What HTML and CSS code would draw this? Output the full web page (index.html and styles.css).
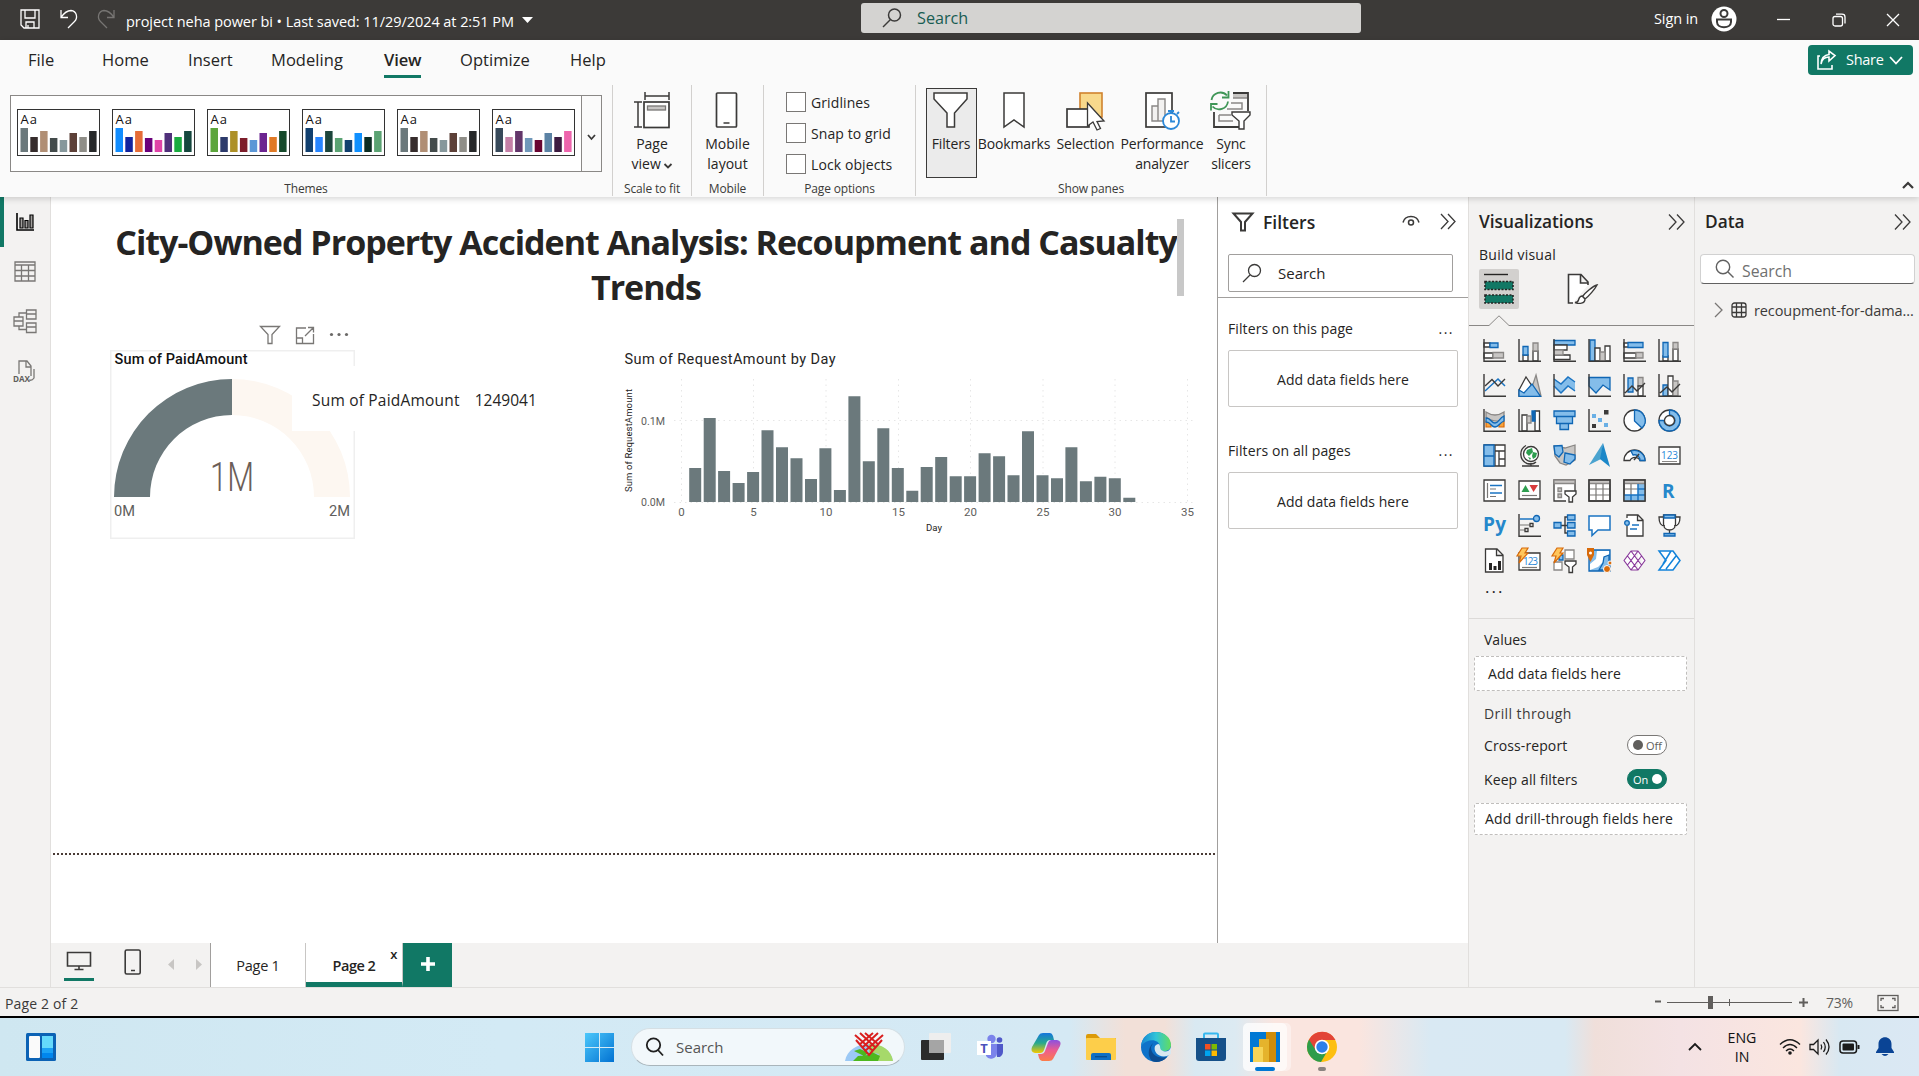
FILE: index.html
```html
<!DOCTYPE html>
<html lang="en">
<head>
<meta charset="utf-8">
<title>project neha power bi</title>
<link rel="stylesheet" href="styles.css">
</head>
<body>
<div class="app">
<header class="titlebar">
  <div class="quick">
    <svg width="20" height="20" viewBox="0 0 20 20" class="ln"><path d="M1 1H19V19H4L1 16ZM5 1V9H15V1M6 19V13H14V19M8 19V16"/></svg>
    <svg width="19" height="20" viewBox="0 0 19 20" class="ln"><path d="M2 1V8.500H9M2 8.500C5 4 8 1.500 12 1.500C18 2 19 9 15.500 12.500L9 19"/></svg>
    <svg width="19" height="20" viewBox="0 0 19 20" class="ln dim"><path d="M17 1V8.500H10M17 8.500C14 4 11 1.500 7 1.500C1 2 0 9 3.500 12.500L10 19"/></svg>
  </div>
  <div class="doc-title">project neha power bi • Last saved: 11/29/2024 at 2:51 PM</div>
  <svg class="caret" width="12" height="6"><path d="M0 0H11L5.500 6Z" fill="#fff"/></svg>
  <div class="top-search"><svg width="20" height="20" viewBox="0 0 20 20"><g fill="none" stroke="#3b3a39" stroke-width="1.500"><circle cx="12.500" cy="7" r="6"/><path d="M8.500 11.500L1 19"/></g></svg><span>Search</span></div>
  <div class="account">Sign in
    <svg width="26" height="26" viewBox="0 0 26 26"><circle cx="13" cy="13" r="12.500" fill="#fff"/><g fill="none" stroke="#3b3a39" stroke-width="2"><circle cx="13" cy="7.500" r="3.500"/><path d="M6 13.500H20V16C20 23 6 23 6 16Z"/></g></svg>
  </div>
  <div class="wincontrols">
    <svg width="14" height="14" class="ln"><path d="M0 6.500H13"/></svg>
    <svg width="14" height="14" class="ln"><rect x="1" y="3.500" width="9.500" height="9.500" rx="2"/><path d="M4 1.200H10Q13 1.200 13 4V10.500"/></svg>
    <svg width="14" height="14" class="ln"><path d="M1 1L13 13M13 1L1 13"/></svg>
  </div>
</header>

<section class="ribbon">
  <div class="tabrow">
    <nav class="tabs"><span>File</span><span>Home</span><span>Insert</span><span>Modeling</span><span class="on">View</span><span>Optimize</span><span>Help</span></nav>
    <div class="share">
      <svg width="19" height="20" viewBox="0 0 19 20" class="ln"><path d="M3 6H1V19H15V15M4 14C5 9 8 7 12 7V11L18 5.500L12 1V4.500C7 5 4.500 8 4 14Z" stroke-width="1.600"/></svg>
      <span>Share</span>
      <svg width="14" height="9" class="ln"><path d="M1 1L7 7.500L13 1" stroke-width="1.800"/></svg>
    </div>
  </div>
  <div class="groups">
    <div class="group g-themes">
      <div class="gallery">
        <div class="thumbs">
          <svg class="thumb" viewBox="0 0 83 47"><text x="3.500" y="15">Aa</text><g><path fill="#6b797c" d="M3.500 19h7.500v24h-7.500z"/><path fill="#362c2c" d="M13.300 28h7.500v15h-7.500z"/><path fill="#b08e74" d="M23.100 22h7.500v21h-7.500z"/><path fill="#434b4b" d="M32.900 29h7.500v14h-7.500z"/><path fill="#86989c" d="M42.700 31h7.500v12h-7.500z"/><path fill="#5d4038" d="M52.500 24h7.500v19h-7.500z"/><path fill="#8f8e88" d="M62.300 28h7.500v15h-7.500z"/><path fill="#262829" d="M72.100 22h7.500v21h-7.500z"/></g></svg>
          <svg class="thumb" viewBox="0 0 83 47"><text x="3.500" y="15">Aa</text><g><path fill="#118dff" d="M3.500 19h7.500v24h-7.500z"/><path fill="#12239e" d="M13.300 28h7.500v15h-7.500z"/><path fill="#e66c37" d="M23.100 22h7.500v21h-7.500z"/><path fill="#6b007b" d="M32.900 29h7.500v14h-7.500z"/><path fill="#e044a7" d="M42.700 31h7.500v12h-7.500z"/><path fill="#50307a" d="M52.500 24h7.500v19h-7.500z"/><path fill="#1aab40" d="M62.300 28h7.500v15h-7.500z"/><path fill="#15473e" d="M72.100 22h7.500v21h-7.500z"/></g></svg>
          <svg class="thumb" viewBox="0 0 83 47"><text x="3.500" y="15">Aa</text><g><path fill="#5ca53b" d="M3.500 19h7.500v24h-7.500z"/><path fill="#2c3a6b" d="M13.300 28h7.500v15h-7.500z"/><path fill="#ad9026" d="M23.100 22h7.500v21h-7.500z"/><path fill="#7d1e2b" d="M32.900 29h7.500v14h-7.500z"/><path fill="#5b97d6" d="M42.700 31h7.500v12h-7.500z"/><path fill="#6b2490" d="M52.500 24h7.500v19h-7.500z"/><path fill="#e07a26" d="M62.300 28h7.500v15h-7.500z"/><path fill="#16492b" d="M72.100 22h7.500v21h-7.500z"/></g></svg>
          <svg class="thumb" viewBox="0 0 83 47"><text x="3.500" y="15">Aa</text><g><path fill="#12406f" d="M3.500 19h7.500v24h-7.500z"/><path fill="#2885ff" d="M13.300 28h7.500v15h-7.500z"/><path fill="#1c453c" d="M23.100 22h7.500v21h-7.500z"/><path fill="#5ba373" d="M32.900 29h7.500v14h-7.500z"/><path fill="#12406f" d="M42.700 31h7.500v12h-7.500z"/><path fill="#1090ff" d="M52.500 24h7.500v19h-7.500z"/><path fill="#0c2d23" d="M62.300 28h7.500v15h-7.500z"/><path fill="#5ba373" d="M72.100 22h7.500v21h-7.500z"/></g></svg>
          <svg class="thumb" viewBox="0 0 83 47"><text x="3.500" y="15">Aa</text><g><path fill="#6b797c" d="M3.500 19h7.500v24h-7.500z"/><path fill="#362c2c" d="M13.300 28h7.500v15h-7.500z"/><path fill="#b08e74" d="M23.100 22h7.500v21h-7.500z"/><path fill="#434b4b" d="M32.900 29h7.500v14h-7.500z"/><path fill="#86989c" d="M42.700 31h7.500v12h-7.500z"/><path fill="#5d4038" d="M52.500 24h7.500v19h-7.500z"/><path fill="#8f8e88" d="M62.300 28h7.500v15h-7.500z"/><path fill="#262829" d="M72.100 22h7.500v21h-7.500z"/></g></svg>
          <svg class="thumb" viewBox="0 0 83 47"><text x="3.500" y="15">Aa</text><g><path fill="#37495a" d="M3.500 19h7.500v24h-7.500z"/><path fill="#c580a7" d="M13.300 28h7.500v15h-7.500z"/><path fill="#63366a" d="M23.100 22h7.500v21h-7.500z"/><path fill="#7098ba" d="M32.900 29h7.500v14h-7.500z"/><path fill="#690632" d="M42.700 31h7.500v12h-7.500z"/><path fill="#5b82a4" d="M52.500 24h7.500v19h-7.500z"/><path fill="#3d1b40" d="M62.300 28h7.500v15h-7.500z"/><path fill="#ee65ad" d="M72.100 22h7.500v21h-7.500z"/></g></svg>
        </div>
        <div class="drop"><svg width="9" height="7" class="dk"><path d="M1 1L4.500 5L8 1" stroke-width="1.800"/></svg></div>
      </div>
      <div class="glabel">Themes</div>
    </div>
    <div class="group g-scale">
      <div class="cmd"><svg width="38" height="40" viewBox="0 0 38 40" class="dk"><path d="M12 0V8M36 0V8M12 4H36M1 10H9M1 35H9M5 10V35" stroke-width="1.500"/><rect x="11" y="10" width="25" height="25.500" stroke-width="1.700" fill="#fff"/><rect x="14.500" y="14" width="18" height="4" fill="#c8c6c4" stroke="#797775" stroke-width="1.300"/></svg>
      <span>Page<br>view <svg width="8" height="6" class="dk"><path d="M.500 1L4 4.500L7.500 1" stroke-width="1.800"/></svg></span></div>
      <div class="glabel">Scale to fit</div>
    </div>
    <div class="group g-mobile">
      <div class="cmd"><svg width="24" height="40" viewBox="0 0 24 40" class="dk"><rect x="1.500" y="1" width="20" height="34" rx="1" stroke-width="1.700" fill="#fff"/><path d="M8.500 31H14.500" stroke-width="1.500"/></svg><span>Mobile<br>layout</span></div>
      <div class="glabel">Mobile</div>
    </div>
    <div class="group g-options">
      <div class="checks"><label><i></i>Gridlines</label><label><i></i>Snap to grid</label><label><i></i>Lock objects</label></div>
      <div class="glabel">Page options</div>
    </div>
    <div class="group g-panes">
      <div class="cmds">
        <div class="cmd active"><svg width="36" height="40" viewBox="0 0 36 40" class="dk"><path d="M1 1H34V7L21.500 21V35H14V21L1 7Z" stroke-width="1.500" fill="#fff"/></svg><span>Filters</span></div>
        <div class="cmd"><svg width="26" height="40" viewBox="0 0 26 40" class="dk"><path d="M3 1H23V35L13 28L3 35Z" stroke-width="1.500" fill="#fff"/></svg><span>Bookmarks</span></div>
        <div class="cmd"><svg width="38" height="40" viewBox="0 0 38 40" class="dk"><rect x="14" y="1" width="22" height="24" fill="#f8d98c" stroke="#d0822d" stroke-width="1.600"/><rect x="1" y="17" width="22" height="18" fill="#fff" stroke-width="1.700"/><path d="M21.500 11V34L27 30L31 38L34.500 36.500L31 29.500L38 29Z" fill="#fff" stroke-width="1.300"/></svg><span>Selection</span></div>
        <div class="cmd"><svg width="36" height="40" viewBox="0 0 36 40" class="dk"><rect x="2" y="1" width="26" height="34" fill="#fff" stroke-width="1.700"/><g stroke="#8a8886" fill="#f3f2f1" stroke-width="1.400"><path d="M8 14H14V29H8ZM14 7H21V29H14Z"/></g><g stroke="#2b88d8" fill="#fff" stroke-width="1.800"><circle cx="27" cy="29" r="8"/><path d="M27 24V29.500H31M24 19H30M27 19V21M33 22L35 20"/></g></svg><span>Performance<br>analyzer</span></div>
        <div class="cmd"><svg width="40" height="40" viewBox="0 0 40 40" class="dk"><path d="M22 1H37V19M3 20V35H28" stroke-width="1.800"/><path d="M22 2H36V6H22Z" fill="#c8c6c4" stroke="none"/><path d="M22 6H36M20 11H31V17H16M8 23V29H22M8 23H20" stroke="#8a8886" stroke-width="1.500"/><path d="M21 20H39V23L33 29V37H28V29L21 23Z" fill="#fff" stroke-width="1.400"/><g stroke="#3f9657" stroke-width="1.800"><path d="M.500 8A9 9 0 0 1 16 3.500M17.500-1V5.500H11M17 9.500A9 9 0 0 1 1.500 14.500M0 18.500V12H6.500"/></g></svg><span>Sync<br>slicers</span></div>
      </div>
      <div class="glabel">Show panes</div>
    </div>
    <svg class="collapse dk" width="14" height="9"><path d="M2 7L7 2L12 7" stroke-width="2.200"/></svg>
  </div>
</section>

<main class="body">
  <aside class="rail">
    <div class="ritem sel"><svg width="20" height="20" viewBox="0 0 20 20" class="dk blk"><path d="M2 1V18H19" stroke-width="1.600"/><path d="M5 6H8V16H5ZM10 8.500H13V16H10ZM15 3H18V16H15Z" fill="#a19f9d" stroke-width="1.200"/></svg></div>
    <div class="ritem"><svg width="22" height="22" viewBox="0 0 22 22" class="gr"><path d="M1 1H21V20H1ZM1 4H21M1 9.500H21M1 15H21M7.500 4V20M14.500 4V20"/></svg></div>
    <div class="ritem"><svg width="24" height="24" viewBox="0 0 24 24" class="gr"><path d="M13.500 0H23V9H13.500ZM13.500 4H23M13.500 13H23V22.500H13.500ZM13.500 17H23M1 7H10V16H1ZM1 11H10M6 7V3H13.500M6 16V19.500H13.500"/></svg></div>
    <div class="ritem"><svg width="24" height="24" viewBox="0 0 24 24" class="gr"><path d="M6 14V1H14L18 6V16M13 1V7H18M16 20Q19 21 21 18V9"/><text x="0" y="22" textLength="17" lengthAdjust="spacingAndGlyphs">DAX</text></svg></div>
  </aside>

  <div class="center">
    <div class="work">
      <div class="canvas">
        <h1>City-Owned Property Accident Analysis: Recoupment and Casualty<br>Trends</h1>
        <div class="sbar"></div>
        <div class="vishead">
          <svg width="22" height="20" viewBox="0 0 22 20" class="gr"><path d="M1.500 1.500H20.500L13 9.500V18.500H9V9.500Z"/></svg>
          <svg width="20" height="20" viewBox="0 0 20 20" class="gr"><path d="M11 3H1.500V18.500H18.500V9M1.500 13H7.500V18.500M10 11L18 3M13 2.500H18.500V7.500"/></svg>
          <svg width="20" height="20" viewBox="0 0 20 20"><g fill="#6b6967"><circle cx="2.500" cy="9.500" r="1.600"/><circle cx="10" cy="9.500" r="1.600"/><circle cx="17.500" cy="9.500" r="1.600"/></g></svg>
        </div>
        <svg class="gauge" width="245" height="189" viewBox="0 0 245 189">
          <rect x=".75" y=".75" width="243.500" height="187.500" fill="#fff" stroke="#efefef" stroke-width="1.500"/>
          <text class="din med" x="4.500" y="14" textLength="133">Sum of PaidAmount</text>
          <path d="M4 147A118 118 0 0 1 122 29V65A82 82 0 0 0 40 147Z" fill="#6b797c"/>
          <path d="M240 147A118 118 0 0 0 122 29V65A82 82 0 0 1 204 147Z" fill="#fdf7f1"/>
          <text class="din big" x="100" y="140.500" textLength="44" lengthAdjust="spacingAndGlyphs">1M</text>
          <text class="din lab" x="4" y="166" textLength="21" lengthAdjust="spacingAndGlyphs">0M</text>
          <text class="din lab" x="219" y="166" textLength="21" lengthAdjust="spacingAndGlyphs">2M</text>
        </svg>
        <div class="tip"><span>Sum of PaidAmount</span><span>1249041</span></div>
        <svg class="chart" width="580" height="190" viewBox="620 346 580 190">
          <text class="din med2" x="624.500" y="364" textLength="211">Sum of RequestAmount by Day</text>
          <g class="grid"><path d="M681.500 379V502M753.500 379V502M826 379V502M898.500 379V502M970.500 379V502M1043 379V502M1115 379V502M1187.500 379V502M674 420.500H1194M674 502.500H1194"/></g>
          <g fill="#6b797c"><path d="M689.200 468h12v34h-12zM703.700 418h12v84h-12zM718.100 471h12v31h-12zM732.600 483h12v19h-12zM747.100 472h12v30h-12zM761.500 430.300h12v71.700h-12zM776 447.300h12v54.700h-12zM790.500 458.300h12v43.700h-12zM805 479h12v23h-12zM819.400 448.300h12v53.700h-12zM833.900 490h12v12h-12zM848.400 396.300h12v105.700h-12zM862.800 461.300h12v40.700h-12zM877.300 428.300h12v73.700h-12zM891.800 468h12v34h-12zM906.300 490.700h12v11.300h-12zM920.700 467h12v35h-12zM935.200 457h12v45h-12zM949.700 476.300h12v25.700h-12zM964.100 476.300h12v25.700h-12zM978.600 453.300h12v48.700h-12zM993.100 456.300h12v45.700h-12zM1007.500 475.300h12v26.700h-12zM1022 431.300h12v70.700h-12zM1036.500 475.300h12v26.700h-12zM1051 478.300h12v23.700h-12zM1065.400 447.300h12v54.700h-12zM1079.900 481.300h12v20.700h-12zM1094.400 476.700h12v25.300h-12zM1108.800 478.300h12v23.700h-12zM1123.300 497.700h12v4.300h-12z"/></g>
          <g class="din ax">
            <text x="641" y="424.500" textLength="24" lengthAdjust="spacingAndGlyphs">0.1M</text><text x="641" y="506" textLength="24" lengthAdjust="spacingAndGlyphs">0.0M</text>
            <g text-anchor="middle"><text x="681.500" y="516">0</text><text x="753.500" y="516">5</text><text x="826" y="516">10</text><text x="898.500" y="516">15</text><text x="970.500" y="516">20</text><text x="1043" y="516">25</text><text x="1115" y="516">30</text><text x="1187.500" y="516">35</text></g>
          </g>
          <text class="din axt" x="926" y="531" textLength="16" lengthAdjust="spacingAndGlyphs">Day</text>
          <text class="din axt" transform="translate(632 492) rotate(-90)" textLength="103">Sum of RequestAmount</text>
        </svg>
        <div class="pageline"></div>
      </div>

      <aside class="filters">
        <div class="fhead">
          <svg width="22" height="20" viewBox="0 0 22 20" class="dk"><path d="M1.500 1.500H20.500L13 10V18.500H9V10Z" stroke-width="2"/></svg>
          <b>Filters</b>
          <svg class="eye dk" width="18" height="14"><path d="M1 7.500C3-.500 15-.500 17 7.500" stroke-width="1.500"/><circle cx="9" cy="7.500" r="2.500" stroke-width="1.500"/></svg>
          <svg width="16" height="18" class="dk"><path d="M1 1L8 8.500L1 16M8 1L15 8.500L8 16"/></svg>
        </div>
        <div class="fsearch"><svg width="20" height="20" viewBox="0 0 20 20" class="dk"><circle cx="12.500" cy="7.500" r="6"/><path d="M8 12L1 19"/></svg>Search</div>
        <div class="flist">
          <div class="frow"><span>Filters on this page</span><em>...</em></div>
          <div class="fbox">Add data fields here</div>
          <div class="frow two"><span>Filters on all pages</span><em>...</em></div>
          <div class="fbox">Add data fields here</div>
        </div>
      </aside>
    </div>
    <div class="pagetabs">
      <div class="modes">
        <div class="mode on"><svg width="26" height="20" viewBox="0 0 26 20" class="dk"><path d="M1.500 1.500H24.500V15H1.500ZM13 15V18.500M8.500 18.500H17.500" stroke-width="1.600"/></svg></div>
        <div class="mode"><svg width="18" height="26" viewBox="0 0 18 26" class="dk"><rect x="1.200" y="1" width="15" height="24" rx="1.500" stroke-width="1.600"/><path d="M7 21.500H11" stroke-width="1.500"/></svg></div>
        <svg width="7" height="11"><path d="M6 0V11L0 5.500Z" fill="#c8c6c4"/></svg>
        <svg width="7" height="11"><path d="M0 0V11L6 5.500Z" fill="#c8c6c4"/></svg>
      </div>
      <div class="ptab">Page 1</div>
      <div class="ptab on">Page 2<span class="x">x</span></div>
      <div class="plus"><svg width="14" height="14"><path d="M7 0V14M0 7H14" stroke="#fff" stroke-width="3.600"/></svg></div>
    </div>
  </div>

  <aside class="viz">
    <div class="phead"><b>Visualizations</b><svg width="17" height="18" class="dk"><path d="M1 1.500L8 9L1 16.500M9 1.500L16 9L9 16.500"/></svg></div>
    <div class="build">Build visual</div>
    <div class="vtabs">
      <div class="vtab on"><svg width="40" height="40"><path d="M5 5.500H29" stroke="#252423" stroke-width="1.400"/><g fill="#117865" stroke="#252423" stroke-width="1.600" stroke-dasharray="2 1.500"><path d="M6 12.500H34V20.500H6ZM6 26H34V34H6Z"/></g></svg></div>
      <svg width="32" height="32" viewBox="0 0 32 32" class="dk"><path d="M6 30H1.500V1.500H14L21 9V12M13.500 1.500V10H21" fill="#fff" stroke-width="1.600"/><path d="M30 12C26 13 18 20 15.500 23.500L18 26C22 23 28 16 30 12ZM15.500 23C13 23 12 25 11.500 27C11 29 9 29.500 8 29.500C12 31 18 31 18 26Z" fill="#fff" stroke-width="1.400"/></svg>
    </div>
    <svg class="notch" width="225" height="11"><path d="M0 10.500H20L30 .800L40 10.500H225" fill="none" stroke="#8a8886"/></svg>
    <div class="vgrid">
      <svg class="vi" viewBox="0 0 23 23"><path class="w" d="M1 4H7V8H1ZM1 14H10V19H1Z"/><path class="b" d="M7 4H15V8.500H7Z"/><path class="g" d="M10 13.500H20.500V19H10Z"/><path class="k" d="M1 0V22.300H23"/></svg>
      <svg class="vi" viewBox="0 0 23 23"><path class="w" d="M5 16H10V22H5ZM15 12H20V22H15Z"/><path class="b" d="M5 7.500H10V16H5Z"/><path class="g" d="M15 4H20V12H15Z"/><path class="k" d="M1 0V22.300H23"/></svg>
      <svg class="vi" viewBox="0 0 23 23"><path class="b" d="M1 1.500H22V6H1Z"/><path class="w" d="M1 6H14V11H1ZM1 16H17V20.500H1Z"/><path class="g" d="M1 11H10V16H1Z"/><path class="k" d="M1 0V22.300H23"/></svg>
      <svg class="vi" viewBox="0 0 23 23"><path class="b" d="M2 1H7V22H2Z"/><path class="w" d="M7 9H12V22H7ZM17 7H22V22H17Z"/><path class="g" d="M12 13H17V22H12Z"/><path class="k" d="M1 0V22.300H23"/></svg>
      <svg class="vi" viewBox="0 0 23 23"><path class="w" d="M1 4H6V8H1ZM1 14H13V19H1Z"/><path class="b" d="M5 3.500H20V8.500H5Z"/><path class="g" d="M13 13.500H20V19H13Z"/><path class="k" d="M1 0V22.300H23"/></svg>
      <svg class="vi" viewBox="0 0 23 23"><path class="w" d="M5 17H10V22H5ZM15 10H20V22H15Z"/><path class="b" d="M5 3.500H10V18H5Z"/><path class="g" d="M15 3.500H20V10H15Z"/><path class="k" d="M1 0V22.300H23"/></svg>

      <svg class="vi" viewBox="0 0 23 23"><path class="bl" d="M2 17L15 5L22 12"/><path class="k" d="M2 12L9 5.500L15 12L22 5"/><path class="k" d="M1 0V22.300H23"/></svg>
      <svg class="vi" viewBox="0 0 23 23"><path class="g" d="M18 1L23 22H11Z"/><path class="w" d="M1 16L8 3L14 12L6 22H1Z"/><path class="b" d="M1 16L6 19L14 10L22.500 22.300H1Z"/></svg>
      <svg class="vi" viewBox="0 0 23 23"><path fill="#84bdea" d="M1 5L8 10L15 3L22 8V17L15 12L8 19L1 12Z"/><path class="bl" d="M1 5L8 10L15 3L22 8M1 12L8 19L15 12L22 17"/><path class="k" d="M1 0V22.300H23"/></svg>
      <svg class="vi" viewBox="0 0 23 23"><path class="b" d="M1 3.500H22V16L15 11L8 19L1 12Z"/><path class="k" d="M1 0V22.300H23"/></svg>
      <svg class="vi" viewBox="0 0 23 23"><path class="b" d="M5 4H10V18H5Z"/><path class="g" d="M15 3.500H20V12H15Z"/><path class="w" d="M15 12H20V22H15Z"/><path class="k" d="M2 19L9 12L14 17L22 9M1 0V22.300H23"/></svg>
      <svg class="vi" viewBox="0 0 23 23"><path class="b" d="M5 11H10V22H5Z"/><path class="w" d="M10 2H15V22H10Z"/><path class="g" d="M15 7H20V22H15Z"/><path class="k" d="M2 19L9 13L14 18L22 10M1 0V22.300H23"/></svg>

      <svg class="vi" viewBox="0 0 23 23"><path class="g" d="M3 3C9 7 15 7 21 3V11C15 13 9 13 3 8Z"/><path class="o" d="M3 12H8V18H3ZM16 12H21V18H16Z"/><path class="b" d="M3 9C8 9 8 14 12 14C16 14 16 9 21 7V12C16 14 16 18 12 18C8 18 8 13 3 13Z"/><path class="k" d="M1 0V22.300H23"/></svg>
      <svg class="vi" viewBox="0 0 23 23"><path class="w" d="M4 6H9V22H4ZM17 2H21.500V22H17Z"/><path class="b dp" d="M14 2H17V12H14Z"/><path class="g" d="M9 7H13V14H9Z"/><path class="k" d="M1 0V22.300H23"/></svg>
      <svg class="vi" viewBox="0 0 23 23"><path class="b" d="M1 2H22V7.500H1ZM3.500 7.500H19.500V14.500H3.500ZM7 14.500H15.500V20.500H7Z"/></svg>
      <svg class="vi" viewBox="0 0 23 23"><path d="M4 5h4v4h-4zM10 9h4v4h-4zM16 14h4v4h-4z" fill="#69afe5"/><path d="M16 1h4.500v4.500h-4.500zM4 15h4v4h-4z" fill="#3b3a39"/><path class="k" d="M1 0V22.300H23"/></svg>
      <svg class="vi" viewBox="0 0 23 23"><circle class="w" cx="11.500" cy="11.500" r="10.500"/><path class="b" d="M11.500 1A10.500 10.500 0 0 1 19 19L11.500 12Z"/></svg>
      <svg class="vi" viewBox="0 0 23 23"><circle class="w" cx="11.500" cy="11.500" r="10.500"/><path class="b" d="M11.500 1A10.500 10.500 0 1 1 1 11.500H6A5.500 5.500 0 1 0 11.500 6Z"/><circle class="w" cx="11.500" cy="11.500" r="5"/></svg>

      <svg class="vi" viewBox="0 0 23 23"><path class="w" d="M1 1H22V22H1ZM12 7H22M12 1V22M16 7V22M16 15H22"/><path class="b" d="M1 1H11V12H1ZM1 12H11V22H1Z"/></svg>
      <svg class="vi" viewBox="0 0 23 23"><circle class="w" cx="13" cy="10" r="7.500"/><path d="M9 6l5-2 1 4-4 4-3-3zM15 8l4 1-1 4-3 2-1-3zM10 13l3 1-1 2z" fill="#2e9e4f"/><path class="k" d="M8 1.500A10 10 0 0 0 9 19.500Q15 21 18 18M4 22H21M13 19V22"/></svg>
      <svg class="vi" viewBox="0 0 23 23"><path class="g" d="M1 2L12 4L22 1V16L13 21L7 19L2 12Z"/><path class="b" d="M1 2L9 1.500L10 8L6 13L2 10ZM12 9L22 11V15L17 20L11 18Z"/></svg>
      <svg class="vi" viewBox="0 0 23 23"><path d="M15-1L1 21L13 15Z" fill="#4aa3cf"/><path d="M15-1L22 23L12 15Z" fill="#1b87c8"/></svg>
      <svg class="vi" viewBox="0 0 23 23"><path class="w" d="M1 16.500A10.500 10.500 0 0 1 22 16.500H17A5.500 5.500 0 0 0 7 16.500Z"/><path class="b" d="M8 7A10.500 10.500 0 0 1 22 16.500H17A5.500 5.500 0 0 0 10 11Z"/><path class="k" d="M11 16L16 10" stroke-width="2"/></svg>
      <svg class="vi" viewBox="0 0 23 23"><path class="w" d="M1 3H22V20H1Z"/><text x="3" y="14.500" class="n" textLength="17">123</text><path d="M4 17.500H19" stroke="#8a8886"/></svg>

      <svg class="vi" viewBox="0 0 23 23"><path class="w" d="M1 1H22V22H1Z"/><path class="bl" d="M7 6.500H19M7 14H19" stroke-width="2"/><path class="kg" d="M4.500 4V19M7 10H13M7 17.500H13"/></svg>
      <svg class="vi" viewBox="0 0 23 23"><path class="w" d="M1 2H22V20H1Z"/><path d="M3.500 13L7.500 6L11.500 13Z" fill="#2e9e4f"/><path d="M11.500 6H20L15.500 13Z" fill="#d83b3b"/><path class="kg" d="M4 16.500H19"/></svg>
      <svg class="vi" viewBox="0 0 23 23"><path class="w" d="M22 12V1H1V22H13"/><path class="g" d="M1 1H22V4.500H1ZM5 9H8.500V12.500H5ZM5 15H8.500V18.500H5Z"/><path class="w" d="M12 12H23V15L19.500 18V23H16V18L12 15Z"/></svg>
      <svg class="vi" viewBox="0 0 23 23"><path class="w" d="M1 1H22V22H1Z"/><path class="g" d="M1 1H22V4.500H1Z"/><path class="kg" d="M1 10H22M1 16H22M8 5V22M15 5V22"/><path class="k" d="M1 1H22V22H1Z"/></svg>
      <svg class="vi" viewBox="0 0 23 23"><path class="w" d="M1 1H22V22H1Z"/><path d="M15 5h7v17h-21v-6h14z" fill="#84bdea"/><path class="g" d="M1 1H22V4.500H1Z"/><path class="kg" d="M1 10H15M8 5V16"/><path class="bl" d="M1 16H22M15 5V22M8 16V22M15 10H22"/><path class="k" d="M1 1H22V22H1Z"/></svg>
      <svg class="vi" viewBox="0 0 23 23"><text x="4" y="19" class="l">R</text></svg>

      <svg class="vi" viewBox="0 0 23 23"><text x="0" y="17" class="l" textLength="23">Py</text></svg>
      <svg class="vi" viewBox="0 0 23 23"><path class="bl" d="M2 5H15" stroke-width="2"/><circle class="b" cx="18.500" cy="4.500" r="3"/><path class="kg" d="M2 11H12M2 16H7"/><path class="w" d="M12 9.500H15V12.500H12ZM7 14.500H10V17.500H7Z"/><path class="k" d="M1 0V22.300H23"/></svg>
      <svg class="vi" viewBox="0 0 23 23"><path class="k" d="M8 11.500H15M15 3H12V19H15"/><path class="b" d="M1 8.500H8V14H1ZM14.500 1H22V6H14.500ZM14.500 8.500H22V14H14.500ZM14.500 17H22V22H14.500Z"/></svg>
      <svg class="vi" viewBox="0 0 23 23"><path class="bl" fill="#fff" d="M1 2H22V16H10L4 21.500V16H1Z"/></svg>
      <svg class="vi" viewBox="0 0 23 23"><path class="w" d="M4 4V1H15L20 6V22H4V12M14.500 1V6.500H20"/><circle class="b" cx="4" cy="9" r="2.300"/><path class="bl" d="M9 11H16M7 15H14"/></svg>
      <svg class="vi" viewBox="0 0 23 23"><path class="w" d="M5 3H1C1 9 3 12 7 12M18 3H22C22 9 20 12 16 12M5.500 1H17.500V10C17.500 18 5.500 18 5.500 10ZM11.500 16V20"/><path class="b" d="M6 1H17V4H6ZM6 19.500H17V22H6Z"/></svg>

      <svg class="vi" viewBox="0 0 23 23"><path class="w" d="M2.500 0H14L20 6V23H2.500ZM13.500 0V6.500H20"/><path d="M6 14h3v7h-3zM10.500 17h3v4h-3zM15 12h3v9h-3z" fill="#252423"/></svg>
      <svg class="vi" viewBox="0 0 23 23"><path class="w" d="M1 4H22V21H1Z"/><text x="5" y="16" class="n" textLength="15">123</text><path class="kg" d="M4 18.500H19"/><path class="o bolt" d="M4-1H10L7 4H10L1 14L3 7H-1Z"/></svg>
      <svg class="vi" viewBox="0 0 23 23"><path class="w kgs" d="M12 1H21V10H12ZM1 13H9V21H1Z"/><path class="b" d="M6 6H10V11H6Z"/><path class="w" d="M12 12H23V15L19.500 18V23.500H16V18L12 15Z"/><path class="o bolt" d="M4-1H10L7 4H10L1 14L3 7H-1Z"/></svg>
      <svg class="vi" viewBox="0 0 23 23"><path class="b" d="M1 1H22V22H1Z"/><path d="M9 2h12v4l-5 2-1 5-5 5-8 3v-6l6-5z" fill="#fff"/><path class="b" d="M21 6L16 8L15 14L11 21H21Z"/><path d="M-1-1h7v7l-3.500 7-3.500-7z" fill="#d86a0a"/><circle cx="2.500" cy="4" r="1.500" fill="#fff"/><g fill="#d86a0a" stroke="#fff"><circle cx="19" cy="20" r="3.500"/><circle cx="22" cy="14" r="2"/></g></svg>
      <svg class="vi" viewBox="0 0 23 23"><path d="M1 11.500L8 2H15L22 11.500L15 21H8ZM8 2L15 11.500L8 21M15 2L8 11.500L15 21M4.500 7L8 11.500L4.500 16M18.500 7L15 11.500L18.500 16" fill="#fff" stroke="#8a3a9c" stroke-width="1.200" stroke-linejoin="round"/></svg>
      <svg class="vi" viewBox="0 0 23 23"><path d="M1 2H15L22 11.500L15 21H1L8 11.500ZM13 2L5 15M18 7L8 20" fill="#fff" stroke="#1283da" stroke-width="1.500"/></svg>
    </div>
    <div class="vmore">...</div>
    <div class="wells">
      <div class="wl">Values</div>
      <div class="well">Add data fields here</div>
      <div class="wl drill">Drill through</div>
      <div class="trow"><span>Cross-report</span><div class="tog off"><i></i>Off</div></div>
      <div class="trow"><span>Keep all filters</span><div class="tog ont">On<i></i></div></div>
      <div class="well low">Add drill-through fields here</div>
    </div>
  </aside>

  <aside class="data">
    <div class="phead"><b>Data</b><svg width="17" height="18" class="dk"><path d="M1 1.500L8 9L1 16.500M9 1.500L16 9L9 16.500"/></svg></div>
    <div class="dsearch"><svg width="20" height="20" viewBox="0 0 20 20"><g fill="none" stroke="#616161" stroke-width="1.400"><circle cx="8" cy="8" r="6.700"/><path d="M13 13L18.500 18.500"/></g></svg><span>Search</span></div>
    <div class="tree"><svg width="9" height="16" class="gr"><path d="M1 1L8 8L1 15"/></svg><svg width="16" height="16" class="dk"><rect x="1" y="1" width="14" height="14" rx="2.500"/><path d="M1 5H15M1 10.500H15M5.500 1V15M10.500 1V15"/></svg><span>recoupment-for-dama...</span></div>
  </aside>
</main>

<footer class="status">
  <span>Page 2 of 2</span>
  <div class="zoom">
    <svg width="160" height="20"><g stroke="#605e5c"><path d="M0 8.500H6M144 9.500H153M148.500 5V14" stroke-width="2"/><path d="M12 9.500H137M74.500 6V13"/></g><path d="M53 3H58V16H53Z" fill="#605e5c"/></svg>
    <span>73%</span>
    <svg width="22" height="18" viewBox="0 0 22 18"><g fill="none" stroke="#605e5c"><rect x="1" y="1.500" width="20" height="15" stroke-width="1.300"/><path d="M4 7V4.500H7M15 4.500H18V7M18 11V13.500H15M7 13.500H4V11" stroke-width="1.300"/></g></svg>
  </div>
</footer>

<div class="taskbar">
  <svg class="widgets" width="30" height="28"><defs><linearGradient id="win" x1="0" y1="0" x2="1" y2="1"><stop offset="0" stop-color="#4cc8fb"/><stop offset="1" stop-color="#0272d2"/></linearGradient><linearGradient id="edge" x1="0" y1="0" x2="1" y2="0"><stop offset="0" stop-color="#1686d3"/><stop offset=".5" stop-color="#31c4d8"/><stop offset="1" stop-color="#63dd5e"/></linearGradient><linearGradient id="cpl" x1="0" y1="0" x2="0" y2="1"><stop offset="0" stop-color="#1575dd"/><stop offset=".5" stop-color="#27a98e"/><stop offset="1" stop-color="#f4c800"/></linearGradient><linearGradient id="cpr" x1="0" y1="0" x2="0" y2="1"><stop offset="0" stop-color="#8b51e0"/><stop offset=".5" stop-color="#ee5d8d"/><stop offset="1" stop-color="#fb7d4a"/></linearGradient></defs><rect width="30" height="28" rx="1.500" fill="#0b62b5"/><rect x="3" y="3" width="11" height="22" rx="1" fill="#fafafa"/><path d="M16 3h11v12h-11z" fill="#65dafc"/><path d="M16 15h11v5h-11z" fill="#1ba2f6"/><path d="M16 20h11v5h-11z" fill="#0086ee"/></svg>
  <div class="apps">
    <svg width="29" height="29"><path fill="url(#win)" d="M0 0h14v14h-14zM15 0h14v14h-14zM0 15h14v14h-14zM15 15h14v14h-14z"/></svg>
    <div class="tsearch"><svg width="19" height="20" viewBox="0 0 19 20"><g fill="none" stroke="#202020" stroke-width="1.800"><circle cx="8.500" cy="8" r="6.700"/><path d="M13 13L18 18.500"/></g></svg><span>Search</span>
      <svg width="48" height="30" viewBox="0 0 48 30"><path d="M0 29C2 18 12 12 24 12S46 18 48 29Z" fill="#9cc9f5"/><path d="M24 12C38 12 46 18 48 29H30L34 22L24 20Z" fill="#a6d96a"/><path d="M9 19l6-2 9 4-5 3zM8 29l5-5 10-1 4-3 8 4-2 5z" fill="#4db81e"/><path d="M10 3L28 19M15 1L31 16M20 1L34 13M38 3L20 19M33 1L17 16M28 1L14 13M11 8L24 23L37 8" fill="none" stroke="#d91e1e" stroke-width="2"/></svg>
    </div>
    <svg width="30" height="30"><rect y="8" width="23" height="20" rx="1" fill="#2c2c2c"/><rect x="8" y="1" width="22" height="20" rx="1" fill="#eee"/><path d="M8 8h15v13h-15z" fill="#a5a5a5"/></svg>
    <svg width="28" height="28" viewBox="0 0 28 28"><circle cx="15.500" cy="6" r="4.200" fill="#7b83eb"/><circle cx="23.500" cy="7" r="2.800" fill="#5059c9"/><path d="M20 11h7v8a5 5 0 0 1-6 5z" fill="#5059c9"/><path d="M10 11h11v9a6 6 0 0 1-11 3z" fill="#7b83eb"/><rect x="1" y="8" width="14" height="14" fill="#fff"/><text x="8" y="19.500" text-anchor="middle" class="tm">T</text></svg>
    <svg class="copilot" width="30" height="30" viewBox="0 0 30 30"><path d="M8 3Q9 1 12 1H19Q21 1 22 4L23 8H19Q16 8 15 12L13 18Q12 21 9 21H4Q-1 20 1 15Z" fill="url(#cpl)"/><path d="M22 27Q21 29 18 29H11Q9 29 8 26L7 22H10Q13 22 14 19L17 11Q18 8 20 8H26Q31 9 29 14Z" fill="url(#cpr)"/></svg>
    <svg width="30" height="28" viewBox="0 0 30 28"><path d="M0 3Q0 1 2 1H10L14 5H30V14H0Z" fill="#dc9a08"/><rect y="5" width="30" height="22" rx="1" fill="#fdce4a"/><path d="M5 27V22Q5 20 7 20H23Q25 20 25 22V27Z" fill="#0f6fc4"/><path d="M9 23.700H21" stroke="#0a4c8d" stroke-width="1.300"/></svg>
    <svg width="30" height="30" viewBox="0 0 30 30"><circle cx="15" cy="15" r="15" fill="#0e72c9"/><path d="M0 14C1 5 7 0 15 0C24 0 30 6 30 13C30 18 25 20 21 19C17 18 19 16 19 14C18 8 8 5 0 14Z" fill="url(#edge)"/><path d="M10 15C10 22 16 27 26 25C22 30 15 31 11 29C7 25 6 17 12 11Z" fill="#0c4c91"/><path d="M19 14C19 17 20 19 24 19.500C27 19.500 29 18 30 15V22L26 24C18 26 12 20 14 14Q18 10 19 14Z" fill="#d8e8f0"/></svg>
    <svg width="30" height="30" viewBox="0 0 30 30"><path d="M8 6V2.500Q8 1.500 9 1.500H21Q22 1.500 22 2.500V6" fill="none" stroke="#37b8ef" stroke-width="2"/><path d="M0 6H30V26Q30 29 27 29H3Q0 29 0 26Z" fill="#155089"/><path d="M9 12h5.500v5.500h-5.500z" fill="#f25022"/><path d="M15.500 12h5.500v5.500h-5.500z" fill="#7fba00"/><path d="M9 18.500h5.500v5.500h-5.500z" fill="#00a4ef"/><path d="M15.500 18.500h5.500v5.500h-5.500z" fill="#ffb900"/></svg>
    <div class="tile"><svg width="30" height="30"><path d="M0 0h30v30h-30z" fill="#0078d4"/><path d="M16 0h10v30h-10z" fill="#cf8c0b"/><path d="M9 7h10v23h-10z" fill="#e5b32c"/><path d="M3 15h10v15h-10z" fill="#f6d457"/></svg><i></i></div>
    <div class="run"><svg width="30" height="30" viewBox="0 0 30 30"><circle cx="15" cy="15" r="15" fill="#fdbf10"/><path d="M15 15L2 7.500A15 15 0 0 0 14 30L21 18Z" fill="#2e9c4a"/><path d="M2 7.500A15 15 0 0 1 28.500 8H15L8.500 18Z" fill="#e24437"/><circle cx="15" cy="15" r="7.300" fill="#fff"/><circle cx="15" cy="15" r="5.700" fill="#2d7fea"/></svg><i></i></div>
  </div>
  <div class="tray">
    <svg width="16" height="10" class="dk tr"><path d="M2 8L8 2L14 8" stroke-width="1.800"/></svg>
    <div class="lang">ENG<br>IN</div>
    <svg width="22" height="18" viewBox="0 0 22 18" class="dk tr"><path d="M1 6.500Q11-3 21 6.500M4 10Q11 3 18 10M7 13Q11 9 15 13" stroke-width="1.400"/><circle cx="11" cy="15" r="1.800" fill="#1a1a1a" stroke="none"/></svg>
    <svg width="22" height="18" viewBox="0 0 22 18" class="dk tr"><path d="M1 6.500H4.500L9 2V16L4.500 11.500H1ZM12 6.500Q13.500 9 12 11.500M14.500 4Q18 9 14.500 14M17 1.500Q23 9 17 16.500"/></svg>
    <svg width="22" height="14" viewBox="0 0 22 14" class="dk tr"><rect x="1" y="1" width="16.500" height="12" rx="3" stroke-width="1.500"/><rect x="3.500" y="3.500" width="11.500" height="7" rx="1" fill="#1a1a1a" stroke="none"/><path d="M19.500 5V9" stroke-width="2"/></svg>
    <svg width="18" height="20" viewBox="0 0 18 20"><path d="M0 15L2.500 11V7C2.500-2 15.500-2 15.500 7V11L18 15V16H0ZM5.500 17H12.500Q9 21 5.500 17Z" fill="#0a4495"/></svg>
  </div>
</div>
</div>
</body>
</html>
```
FILE: styles.css
```css
*{box-sizing:border-box}
body{margin:0;font-family:"Open Sans","Noto Sans",sans-serif;font-size:14px;color:#252423;overflow:hidden}
svg{display:block;flex:none;overflow:visible}
b{font-weight:600}
.app{width:1919px;height:1076px;display:flex;flex-direction:column}
.ln{fill:none;stroke:#fff;stroke-width:1.3}
.dim{stroke:#777573}
.dk{fill:none;stroke:#3b3a39;stroke-width:1.3}
.blk{stroke:#000}
.gr{fill:none;stroke:#797775;stroke-width:1.3}
.gr text{fill:#605e5c;stroke:none;font-size:8.5px;font-weight:700}

/* title bar */
.titlebar{height:40px;background:#3c3a38;color:#fff;display:flex;align-items:center;flex:none}
.quick{display:flex;gap:19px;margin-left:20px;width:106px;padding-bottom:3px}
.doc-title{width:396px;font-size:14.5px;letter-spacing:-.06px;white-space:nowrap;padding-top:2px}
.caret{margin-right:327px}
.top-search{width:500px;height:30px;margin-bottom:4px;background:#d4d3d1;border-radius:3px;display:flex;align-items:center;gap:15px;padding-left:21px;font-size:16.2px;color:#185c52}
.account{margin-left:293px;width:123px;display:flex;gap:13px;align-items:center;font-size:14.5px;letter-spacing:-.1px;white-space:nowrap;padding-bottom:3px}
.wincontrols{display:flex;gap:40.5px}

/* ribbon */
.ribbon{height:157px;flex:none;background:#fafafa;box-shadow:0 2px 6px rgba(0,0,0,.16);z-index:2;display:flex;flex-direction:column}
.tabrow{height:45px;display:flex;justify-content:space-between;flex:none}
.tabs{display:grid;grid-template-columns:74px 86px 83px 113px 76px 110px 60px;margin-left:28px;font-size:16.5px;letter-spacing:.05px}
.tabs span{justify-self:start;height:38px;line-height:40px}
.tabs .on{font-weight:600;letter-spacing:-.1px;border-bottom:3px solid #117865}
.share{width:105px;height:30px;margin:5px 6px 0 0;background:#117865;border-radius:4px;color:#fff;display:flex;align-items:center;padding-left:9px;font-size:14.5px}
.share span{width:43px;margin-left:10px;letter-spacing:-.3px;padding-bottom:1px}
.groups{display:flex;height:112px;color:#252423}
.group{height:111px;border-right:1px solid #d2d0ce;display:flex;flex-direction:column;justify-content:space-between;align-items:center}
.glabel{font-size:12px;line-height:14px;letter-spacing:-.15px;color:#3b3a39}
.g-themes{width:613px}.g-scale{width:79px}.g-mobile{width:72px}.g-options{width:152px}.g-panes{width:351px}
.g-mobile .cmd,.g-scale .cmd{padding-top:7px}
.gallery{width:592px;height:77px;margin:10px 1px 0 0;border:1px solid #8a8886;background:#fff;display:flex}
.thumbs{flex:1;display:flex;gap:12px;padding:13px 0 0 6px}
.thumb{width:83px;height:47px;outline:1px solid #333;outline-offset:-1px}
.thumb text{font-size:13px;letter-spacing:1px;fill:#111}
.drop{width:20px;border-left:1px solid #8a8886;background:#fafafa;display:flex;align-items:center;justify-content:center;padding-top:8px}
.cmd{display:flex;flex-direction:column;align-items:center;text-align:center;line-height:20px;font-size:14px;gap:2px;padding-top:3px;white-space:nowrap}
.cmd span svg{display:inline-block}
.checks{align-self:flex-start;margin:3px 0 0 22px;display:flex;flex-direction:column;gap:7px;font-size:14px;padding-top:2px}
.checks label{height:24px;display:flex;align-items:center;gap:5px;letter-spacing:.1px}
.checks i{width:20px;height:20px;border:1px solid #797775;background:#fff}
.cmds{align-self:stretch;display:grid;grid-template-columns:50px 76px 67px 86px 52px;padding:3px 0 0 10px;justify-items:center}
.cmds .cmd{letter-spacing:-.15px}
.cmds .active{width:51px;height:90px;margin:0;background:#ebebeb;border:1px solid #3b3a39;padding-top:3px}
.cmds .cmd:not(.active){padding-top:4px}
.collapse{margin:96px 4px 0 auto}

/* body */
.body{height:790px;display:flex;flex:none}
.rail{width:51px;background:#f3f2f1;border-right:1px solid #e1dfdd;flex:none}
.ritem{height:50px;display:flex;align-items:center;justify-content:center;border-left:4px solid transparent;padding-right:4px}
.ritem.sel{border-color:#117865}
.center{width:1417px;display:flex;flex-direction:column}
.work{height:746px;display:flex}
.canvas{width:1166px;position:relative;background:#fff;overflow:hidden}
.canvas>*{position:absolute}
h1{left:0;top:23px;width:1190px;margin:0;text-align:center;font-size:34px;line-height:45px;letter-spacing:-.99px;font-weight:700;white-space:nowrap}
.sbar{left:1126px;top:22px;width:7px;height:77px;background:#c8c8c8}
.vishead{left:208px;top:128px;display:flex;gap:14px}
.gauge{left:59px;top:153px}
.tip{left:241px;top:169px;width:270px;height:65px;background:#fff;display:flex;gap:15px;align-items:center;padding:2px 0 0 20px;font-size:15.5px;letter-spacing:.2px;white-space:nowrap}
.tip span + span{letter-spacing:0}
.chart{left:569px;top:149px}
.din{font-family:Roboto,sans-serif;fill:#252423}
.med{font-size:14.5px;font-weight:500;fill:#111}
.med2{font-size:14.5px}
.big{font-size:40px;font-weight:300;fill:#6b5e58}
.lab{font-size:15.5px;fill:#605e5c}
.ax{font-size:11.5px}.ax text{fill:#605e5c}
.axt{font-size:9.5px}
.grid{fill:none;stroke:#e6e6e6;stroke-dasharray:1.5 4}
.pageline{left:2px;top:656px;width:1164px;height:2px;background:repeating-linear-gradient(90deg,#4a3b36 0 2px,#fff 2px 4px)}

/* filters pane */
.filters{width:251px;border-left:1px solid #a19f9d;background:#fff;font-size:14px}
.fhead{display:flex;align-items:center;height:49px;padding:0 12px 0 14px;font-size:17.5px}
.fhead b{margin-left:9px;flex:1}
.fhead .eye{margin-right:20px}
.fsearch{height:38px;width:225px;margin:8px 0 5px 10px;border:1px solid #a19f9d;border-radius:2px;display:flex;align-items:center;gap:16px;padding-left:13px;font-size:15px}
.flist{border-top:1px solid #a19f9d;padding:21px 10px 0 10px}
.frow{display:flex;justify-content:space-between;height:31px;padding-right:4px;line-height:20px;letter-spacing:.1px}
.frow em{font-style:normal;letter-spacing:1.5px;line-height:20px}
.frow.two{margin-top:34px}
.fbox{height:57px;border:1px solid #c8c6c4;border-radius:2px;display:flex;align-items:center;justify-content:center;padding-top:1px;letter-spacing:.05px}

/* page tabs */
.pagetabs{height:44px;background:#f3f2f1;display:flex}
.modes{width:160px;flex:none;border-right:1px solid #a19f9d;display:flex;align-items:flex-start;padding-left:13px}
.mode{width:30px;height:38px;flex:none;display:flex;justify-content:center;padding-top:8px;margin-right:24px;border-bottom:3px solid transparent}
.mode + .mode{padding-top:6px;margin-right:20px}
.mode.on{border-color:#117865}
.modes>svg{margin-top:16px}
.modes>svg + svg{margin-left:21px}
.ptab{width:95px;background:#fff;border-right:1px solid #c8c6c4;text-align:center;line-height:45px;font-size:14.5px;letter-spacing:-.25px}
.ptab.on{width:97px;border-bottom:5px solid #117865;position:relative;font-weight:600;letter-spacing:-.5px}
.ptab .x{position:absolute;right:5px;top:1px;line-height:20px;font-size:13px}
.plus{width:49px;background:#117865;display:flex;align-items:center;justify-content:center;padding-bottom:3px}

/* visualizations pane */
.viz{width:226px;background:#f3f2f1;border-left:1px solid #e1dfdd;font-size:14px}
.phead{height:49px;display:flex;justify-content:space-between;align-items:center;padding:0 9px 0 10px;font-size:17.3px}
.build{height:22px;padding-left:10px;line-height:17px;font-weight:500;letter-spacing:.25px}
.vtabs{display:flex;gap:48px;height:40px;margin-top:1px;align-items:center;padding-left:10px}
.vtab.on{width:40px;height:40px;background:#d2d0ce;border-radius:2px}
.notch{margin-top:6px}
.vgrid{display:grid;grid-template-columns:repeat(6,23px);gap:12px;padding:13px 0 0 14px}
.vi{width:23px;height:23px}
.vi .k{fill:none;stroke:#3b3a39;stroke-width:1.4}
.vi .w{fill:#fff;stroke:#3b3a39;stroke-width:1.3}
.vi .w.kgs{stroke:#8a8886}
.vi .b{fill:#84bdea;stroke:#0f66b4;stroke-width:1.3}
.vi .dp{fill:#0f66b4}
.vi .g{fill:#c8c6c4;stroke:#8a8886;stroke-width:1.3}
.vi .o{fill:#f8a33c;stroke:#d86a0a;stroke-width:1.2}
.vi .bolt{fill:#ffc65c}
.vi .bl{fill:none;stroke:#1b74c2;stroke-width:1.5}
.vi .bl[fill]{fill:#fff}
.vi .kg{fill:none;stroke:#797775;stroke-width:1.2}
.vi .n{font-size:10px;fill:#2b88d8}
.vi .l{font-size:19px;font-weight:700;fill:#2588cb}
.vmore{padding:2px 0 0 16px;height:46px;line-height:26px;font-size:17px;letter-spacing:2px}
.wells{border-top:1px solid #dcdad8;padding-left:5px}
.wl{padding:11px 0 0 10px;height:37px;line-height:20px}
.well{width:213px;height:35px;background:#fff;border:1px dashed #c0bebc;border-radius:2px;line-height:33px;padding-left:13px;letter-spacing:.1px}
.drill{padding-top:13px;height:38px;font-weight:500;color:#3b3a39;letter-spacing:.4px}
.trow{height:34px;display:flex;justify-content:space-between;align-items:center;padding:0 27px 2px 10px;letter-spacing:.1px}
.tog{width:40px;height:20px;border-radius:10px;border:1px solid #797775;font-size:11px;display:flex;align-items:center;gap:3px;padding-left:5px;color:#605e5c;background:#fff;letter-spacing:0}
.tog i{width:10px;height:10px;border-radius:50%;background:#605e5c}
.ont{background:#117865;color:#fff;border-color:#117865;gap:4px}
.ont i{background:#fff}
.low{margin-top:6px;height:32px;line-height:30px;padding-left:10px;letter-spacing:.15px}

/* data pane */
.data{flex:1;background:#f3f2f1;border-left:1px solid #e1dfdd}
.data .phead{padding:0 8px 0 10px}
.dsearch{height:30px;width:215px;margin:8px 0 0 5px;background:#fff;border:1px solid #d1d1d1;border-bottom-color:#616161;border-radius:4px;display:flex;align-items:center;gap:7px;padding-left:14px;color:#707070;font-size:15.8px}
.dsearch span{padding-top:3px}
.tree{margin:15px 0 0 19px;display:flex;align-items:center;height:22px;color:#3b3a39;white-space:nowrap;font-size:14.5px;letter-spacing:-.1px}
.tree svg + svg{margin:0 7px 0 8px}

/* status bar */
.status{height:29px;flex:none;background:#f3f2f1;border-top:1px solid #e1dfdd;display:flex;justify-content:space-between;align-items:center;padding:2px 20px 0 5px;color:#3b3a39;font-size:14px;letter-spacing:.15px}
.zoom{display:flex;align-items:center;width:244px;color:#605e5c}
.zoom span{flex:1;padding:0 0 2px 11px;letter-spacing:-.3px}

/* taskbar */
.taskbar{flex:1;border-top:2px solid #000;display:flex;align-items:center;background:linear-gradient(90deg,#cfe7f1 0,#d3eaf5 500px,#d5e9f4 1070px,#f2e0d8 1125px,#f2e0d8 1165px,#d9e9f2 1195px,#dceaf2 1235px,#fae5df 1275px,#fae5df 1360px,#d9e9f3 1430px,#d8e9f3 1565px,#f0dfda 1595px,#f4e2e4 1680px,#fbe6df 1800px,#d8e8f2 1840px,#dbe8f4)}
.widgets{margin:0 529px 0 26px}
.apps{display:flex;align-items:center}
.tsearch{width:274px;height:38px;border-radius:19px;margin:0 16px 0 17px;background:#f2f8fb;border:1px solid #d5dfe4;border-bottom-color:#a9b5bb;display:flex;align-items:center;padding:0 11px 0 13px;font-size:15px;color:#555}
.tsearch span{flex:1;margin-left:12px;letter-spacing:0}
.apps>svg + svg{margin-left:25px}
.apps>svg.copilot{margin-left:27px}
.tm{font-size:13px;font-weight:700;fill:#4b53bc}
.tile{width:44px;height:48px;margin-left:17px;background:rgba(255,255,255,.75);border-radius:5px;box-shadow:4px 0 0 rgba(255,255,255,.4);display:flex;flex-direction:column;align-items:center;padding-top:9px;gap:5px}
.tile i{width:20px;height:4px;border-radius:2px;background:#0078d4}
.run{margin-left:20px;display:flex;flex-direction:column;align-items:center;gap:5px;padding-top:9px}
.run i{width:8px;height:4px;border-radius:2px;background:#8a8380}
.tray{margin-left:auto;padding-right:25px;display:flex;align-items:center}
.tr{stroke:#1a1a1a}
.lang{width:44px;margin:0 15px 0 17px;text-align:center;font-size:14.2px;line-height:19.500px;color:#111}
.tray svg + svg{margin-left:8px}
.tray svg:last-child{margin-left:15px}
```
